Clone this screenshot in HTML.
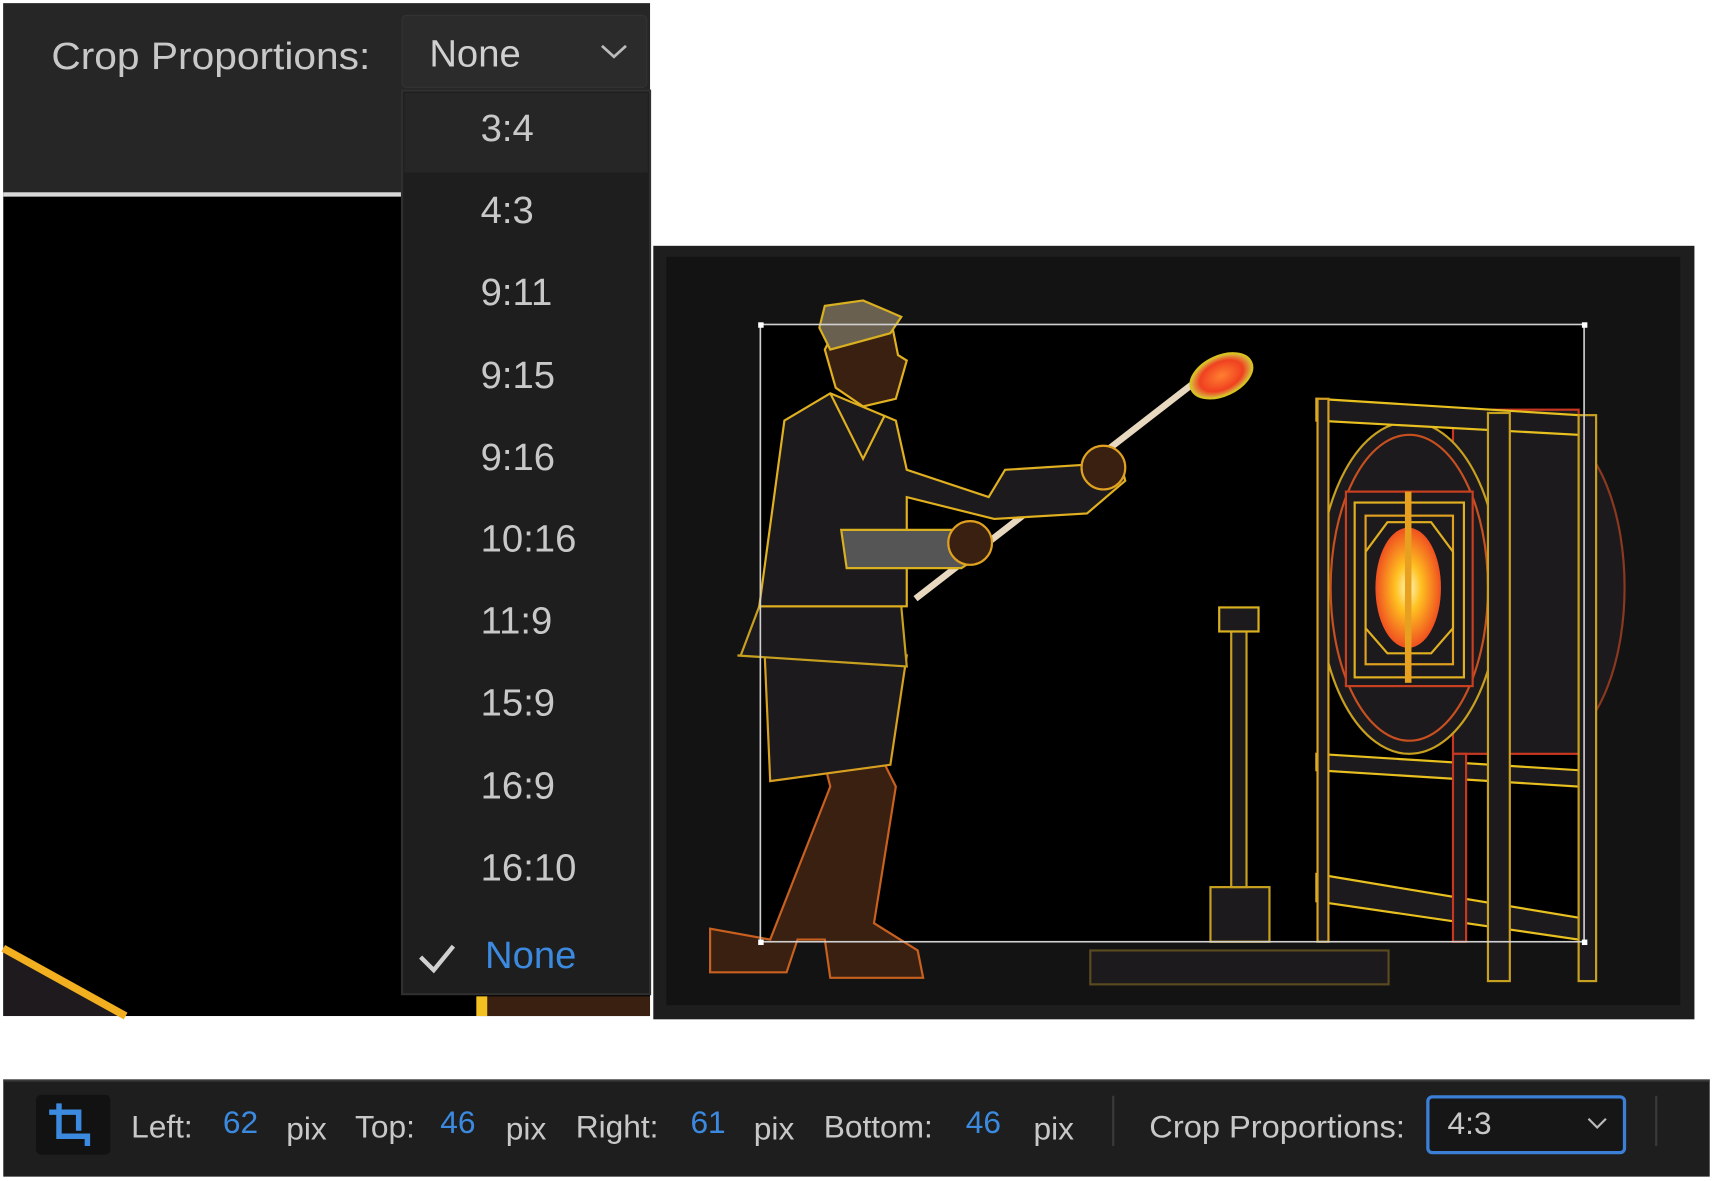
<!DOCTYPE html>
<html><head><meta charset="utf-8"><style>
html,body{margin:0;padding:0;background:#fff;}
svg{display:block}
text{font-family:"Liberation Sans","DejaVu Sans",sans-serif;}
</style></head><body>
<svg width="1713" height="1181" viewBox="0 0 1568 1081" preserveAspectRatio="none" xmlns="http://www.w3.org/2000/svg">
<defs>
<radialGradient id="g1"><stop offset="0" stop-color="#fff8c0"/><stop offset="0.4" stop-color="#ffc020"/><stop offset="1" stop-color="#f05020"/></radialGradient>
<radialGradient id="g2"><stop offset="0" stop-color="#ff8030"/><stop offset="0.7" stop-color="#f04020"/><stop offset="1" stop-color="#d8c040"/></radialGradient>
</defs>
<rect width="1568" height="1081" fill="#fff"/>
<!-- LEFT PANEL -->
<rect x="3" y="3" width="592" height="927" fill="#000"/>
<rect x="3" y="3" width="592" height="174" fill="#262626"/>
<rect x="3" y="176" width="365" height="4" fill="#d8d8d8"/>
<path d="M3 872 L110 930 L3 930Z" fill="#1e1a1e"/>
<path d="M3 868 L115 930" stroke="#f2b020" stroke-width="7"/>
<rect x="440" y="912" width="155" height="18" fill="#3a2010"/>
<rect x="436" y="912" width="10" height="18" fill="#f2c020"/>
<text x="47" y="63" font-size="35" fill="#c8c8c8" textLength="292" lengthAdjust="spacingAndGlyphs">Crop Proportions:</text>
<rect x="368" y="14" width="224" height="66" rx="4" fill="#2b2b2b" stroke="#333" stroke-width="1"/>
<text x="393" y="61" font-size="35" fill="#d0d0d0">None</text>
<path d="M551 42 L562 52 L573 42" stroke="#bbb" stroke-width="2.5" fill="none"/>
<!-- menu -->
<rect x="368" y="83" width="227" height="827" fill="#1e1e1e" stroke="#2f2f2f" stroke-width="2"/>
<rect x="370" y="85" width="223" height="73" fill="#262626"/>
<g font-size="35" fill="#c8c8c8">
<text x="440" y="129">3:4</text>
<text x="440" y="204">4:3</text>
<text x="440" y="279">9:11</text>
<text x="440" y="355">9:15</text>
<text x="440" y="430">9:16</text>
<text x="440" y="505">10:16</text>
<text x="440" y="580">11:9</text>
<text x="440" y="655">15:9</text>
<text x="440" y="731">16:9</text>
<text x="440" y="806">16:10</text>
</g>
<path d="M385 876 L397 888 L415 866" stroke="#d0d0d0" stroke-width="4" fill="none"/>
<text x="444" y="886" font-size="35" fill="#3b8ae0">None</text>

<!-- RIGHT PANEL -->
<rect x="598" y="225" width="953" height="708" fill="#1e1e1e"/>
<rect x="610" y="235" width="928" height="685" fill="#131313"/>
<rect x="696" y="297" width="754" height="565" fill="#000"/>
<g fill="#1c1a1c" stroke-width="2">
 <rect x="998" y="870" width="273" height="31" stroke="#5a4a20"/>
 <rect x="1108" y="812" width="54" height="50" stroke="#c8a020"/>
 <rect x="1127" y="578" width="14" height="234" stroke="#c8a020"/>
 <rect x="1116" y="556" width="36" height="22" stroke="#d8b020"/>
 <path d="M1430 395 A70 145 0 0 1 1430 680" stroke="#8a3820" fill="#1c1a1c"/>
 <rect x="1330" y="375" width="115" height="315" stroke="#c83820"/>
 <ellipse cx="1290" cy="538" rx="83" ry="152" stroke="#c8a020"/>
 <ellipse cx="1290" cy="538" rx="72" ry="140" stroke="#c85020"/>
 <rect x="1232" y="450" width="116" height="178" stroke="#c84020"/>
 <rect x="1240" y="460" width="100" height="160" stroke="#e0b020"/>
 <rect x="1250" y="472" width="80" height="136" stroke="#e0a020"/>
 <path d="M1270 478 L1310 478 L1330 505 L1330 575 L1310 598 L1270 598 L1250 575 L1250 505Z" stroke="#e0b020"/>
 <path d="M1205 365 L1445 380 L1445 398 L1205 385Z" stroke="#e8c020"/>
 <path d="M1205 690 L1445 705 L1445 720 L1205 705Z" stroke="#e8c020"/>
 <path d="M1205 800 L1445 840 L1445 860 L1205 825Z" stroke="#e8c020"/>
 <rect x="1206" y="365" width="10" height="497" stroke="#d8a020"/>
 <rect x="1330" y="690" width="12" height="172" stroke="#c83820"/>
 <rect x="1362" y="378" width="20" height="520" stroke="#c8a020"/>
 <rect x="1445" y="380" width="16" height="518" stroke="#c8a020"/>
</g>
<ellipse cx="1289" cy="538" rx="30" ry="55" fill="url(#g1)"/>
<rect x="1286" y="450" width="6" height="175" fill="#e8a020"/>
<g stroke-width="2">
 <path d="M838 548 L1100 345" stroke="#e8d8c0" stroke-width="6"/>
 <ellipse cx="1118" cy="344" rx="30" ry="18" transform="rotate(-25 1118 344)" fill="url(#g2)" stroke="#d8c020"/>
 <path d="M705 860 L760 720 L755 700 L810 700 L820 720 L800 845 L840 870 L845 895 L760 895 L755 860 L730 860 L720 890 L650 890 L650 850 Z" fill="#3a2010" stroke="#c86020"/>
 <path d="M700 600 L830 600 L815 700 L705 715 Z" fill="#1c1a1c" stroke="#d8a020"/>
 <path d="M678 600 L695 555 L825 555 L830 610 L675 600Z" fill="#1c1a1c" stroke="#c8a020"/>
 <path d="M718 385 L760 360 L820 385 L830 430 L905 455 L920 430 L1000 425 L1025 420 L1030 440 L995 470 L910 475 L830 455 L830 555 L695 555 Z" fill="#1c1a1c" stroke="#e0b020"/>
 <path d="M770 485 L880 485 L895 510 L880 520 L775 520Z" fill="#555" stroke="#d8b020"/>
 <circle cx="888" cy="497" r="20" fill="#3a2010" stroke="#e0a020"/>
 <circle cx="1010" cy="428" r="20" fill="#3a2010" stroke="#e0a020"/>
 <path d="M760 360 L790 420 L810 380" fill="none" stroke="#e0b020"/>
 <path d="M755 320 L770 290 L815 290 L822 325 L830 330 L820 365 L790 372 L765 355 Z" fill="#3a2010" stroke="#e0b020"/>
 <path d="M750 300 L755 280 L790 275 L825 290 L815 305 L760 320Z" fill="#6a6050" stroke="#d8b020"/>
</g>
<rect x="696" y="297" width="754" height="565" fill="none" stroke="#d0d0d0" stroke-width="1.5"/>
<g fill="#fff"><rect x="694" y="295" width="5" height="5"/><rect x="1448" y="295" width="5" height="5"/><rect x="694" y="860" width="5" height="5"/><rect x="1448" y="860" width="5" height="5"/></g>

<!-- BOTTOM BAR -->
<rect x="3" y="988" width="1562" height="89" fill="#1e1e1e"/>
<rect x="3" y="988" width="1562" height="2" fill="#3a3a3a"/>
<rect x="33" y="1002" width="68" height="55" rx="5" fill="#121212"/>
<path d="M54 1010 L54 1040 L80 1040 L80 1049 M45 1018 L72 1018 L72 1035" stroke="#3b8ae0" stroke-width="5" fill="none"/>
<rect x="1018" y="1003" width="2" height="46" fill="#3a3a3a"/>
<rect x="1515" y="1003" width="2" height="46" fill="#3a3a3a"/>
<rect x="1307" y="1004" width="180" height="51" rx="4" fill="#161616" stroke="#3b7fd6" stroke-width="3"/>
<path d="M1454 1024 L1462 1032 L1470 1024" stroke="#bbb" stroke-width="2" fill="none"/>
<g font-size="29" fill="#c8c8c8">
<text x="120" y="1041">Left:</text><text x="204" y="1037" fill="#3b8ae0">62</text><text x="262" y="1043">pix</text>
<text x="325" y="1041">Top:</text><text x="403" y="1037" fill="#3b8ae0">46</text><text x="463" y="1043">pix</text>
<text x="527" y="1041">Right:</text><text x="632" y="1037" fill="#3b8ae0">61</text><text x="690" y="1043">pix</text>
<text x="754" y="1041">Bottom:</text><text x="884" y="1037" fill="#3b8ae0">46</text><text x="946" y="1043">pix</text>
<text x="1052" y="1041" textLength="234" lengthAdjust="spacingAndGlyphs">Crop Proportions:</text>
<text x="1325" y="1038">4:3</text>
</g>
</svg>
</body></html>
